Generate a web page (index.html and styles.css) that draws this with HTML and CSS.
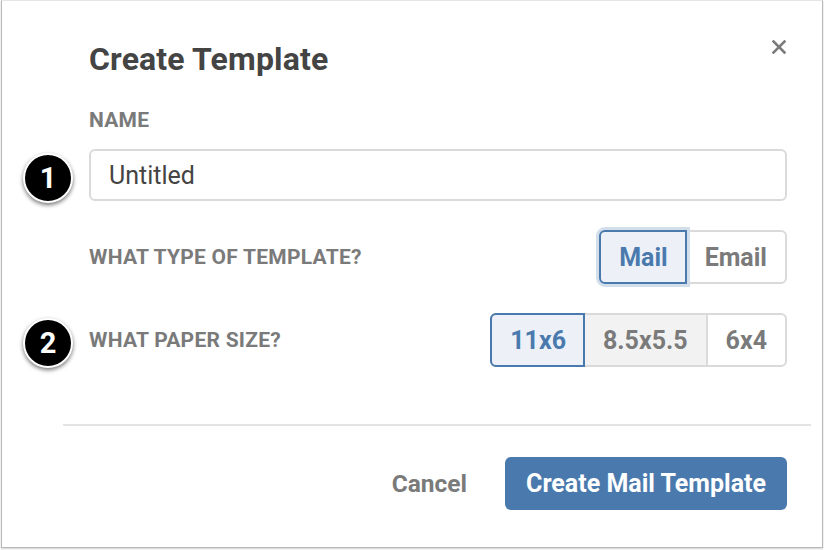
FILE: index.html
```html
<!DOCTYPE html>
<html>
<head>
<meta charset="utf-8">
<link rel="stylesheet" href="styles.css">
</head>
<body>
<div class="modal">
  <div class="header">
    <h1 class="title">Create Template</h1>
    <button class="close" aria-label="Close">
      <svg width="14" height="14" viewBox="0 0 14 14"><path d="M1.5 1.5L12.5 12.5M12.5 1.5L1.5 12.5" stroke="#7b7b7b" stroke-width="2.6" stroke-linecap="square"/></svg>
    </button>
  </div>
  <div class="label name-label">NAME</div>
  <div class="row-annot">
    <span class="badge">1</span>
    <div class="input">Untitled</div>
  </div>
  <div class="field-row">
    <div class="label">WHAT TYPE OF TEMPLATE?</div>
    <div class="seg">
      <span class="seg-item active focus">Mail</span>
      <span class="seg-item">Email</span>
    </div>
  </div>
  <div class="field-row row-annot paper">
    <span class="badge">2</span>
    <div class="label">WHAT PAPER SIZE?</div>
    <div class="seg">
      <span class="seg-item active">11x6</span>
      <span class="seg-item shaded">8.5x5.5</span>
      <span class="seg-item">6x4</span>
    </div>
  </div>
  <div class="divider"></div>
  <div class="footer">
    <span class="cancel">Cancel</span>
    <span class="primary">Create Mail Template</span>
  </div>
</div>
</body>
</html>
```
FILE: styles.css
```css
* { box-sizing: border-box; }
html, body { margin: 0; padding: 0; background: #fff; }
body { font-family: Roboto, "Liberation Sans", sans-serif; width: 824px; height: 550px; overflow: hidden; }

.modal {
  margin-left: 1px;
  width: 822px;
  height: 548px;
  border: 1px solid #b8b8b8;
  border-top-color: #e6e6e6;
  box-shadow: 0 1px 2px rgba(0,0,0,0.18);
  background: #fff;
  padding: 39px 35px 0 87px;
}

.header { display: flex; justify-content: space-between; align-items: flex-start; }
.title {
  margin: 0;
  font-size: 32px;
  line-height: 38px;
  letter-spacing: 0.15px;
  font-weight: 700;
  color: #444;
}
.close {
  border: 0; background: none; padding: 0; margin: 0 1px 0 0;
  width: 14px; height: 14px; display: block;
}
.close svg { display: block; }

.label {
  font-size: 21px;
  letter-spacing: 0.25px;
  font-weight: 700;
  color: #7a7a7a;
  line-height: 22px;
}
.name-label { margin-top: 31px; }

.row-annot { position: relative; }
.badge {
  position: absolute;
  left: -66px;
  top: 50%;
  margin-top: -22px;
  width: 50px; height: 50px;
  border-radius: 50%;
  background: #000;
  border: 2px solid #fff;
  box-shadow: 0 2px 4px rgba(0,0,0,0.55);
  color: #fff;
  font-size: 29px;
  font-weight: 700;
  display: flex; align-items: center; justify-content: center;
}

.input {
  margin-top: 18px;
  height: 52px;
  border: 2px solid #dadada;
  border-radius: 6px;
  padding: 0 18px;
  display: flex; align-items: center;
  font-size: 25px;
  color: #444;
}

.field-row {
  display: flex;
  justify-content: space-between;
  align-items: center;
  margin-top: 29px;
}
.seg {
  display: flex;
  height: 54px;
  border: 2px solid #dadada;
  border-radius: 6px;
}
.seg-item {
  display: flex; align-items: center; justify-content: center;
  padding: 0 18px;
  font-size: 25px;
  font-weight: 700;
  color: #7a7a7a;
  border-left: 2px solid #dadada;
}
.seg-item:first-child { border-left: 0; }
.seg-item:last-child { border-radius: 0 5px 5px 0; }
.seg-item.shaded { background: #f2f2f2; }
.seg-item.active {
  color: #4a7aad;
  background: #edf1f7;
  margin: -2px 0 -2px -2px;
  border: 2px solid #4a7aad;
  border-radius: 6px 0 0 6px;
  padding: 0 17px 0 18px;
}
.seg-item.active + .seg-item { border-left: 0; }
.seg-item.focus { box-shadow: 0 0 0 3px #d3deeb; position: relative; }

.divider {
  margin: 57px -24px 0 -26px;
  height: 2px;
  background: #e4e4e4;
}

.footer {
  display: flex;
  justify-content: flex-end;
  align-items: center;
  gap: 38px;
  margin-top: 31px;
}
.cancel {
  font-size: 24.5px;
  font-weight: 700;
  color: #7a7a7a;
}
.primary {
  height: 53px;
  padding: 0 21px;
  background: #4a7aad;
  border-radius: 6px;
  color: #fff;
  font-size: 25px;
  font-weight: 700;
  display: flex; align-items: center;
}
```
